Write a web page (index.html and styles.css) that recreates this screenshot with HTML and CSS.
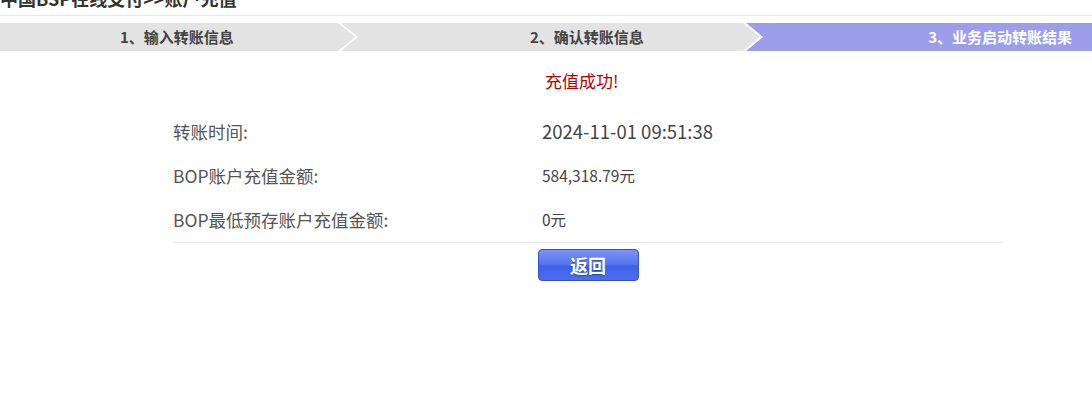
FILE: index.html
```html
<!DOCTYPE html>
<html lang="zh-CN">
<head>
    <meta charset="UTF-8">
    <meta name="viewport" content="width=device-width, initial-scale=1.0">
    <title>账户充值</title>
    <link rel="stylesheet" href="styles.css">
</head>
<body>
    <h2 class="page-title">中国BSP在线支付&gt;&gt;账户充值</h2>

    <div class="steps">
        <div class="step step-first"><span>1、输入转账信息</span></div>
        <div class="step step-middle"><span>2、确认转账信息</span></div>
        <div class="step step-last active"><span>3、业务启动转账结果</span></div>
    </div>

    <div class="result">
        <div class="result-msg">充值成功!</div>
        <div class="result-table">
            <div class="row">
                <div class="label">转账时间:</div>
                <div class="value value-time">2024-11-01 09:51:38</div>
            </div>
            <div class="row">
                <div class="label">BOP账户充值金额:</div>
                <div class="value">584,318.79元</div>
            </div>
            <div class="row">
                <div class="label">BOP最低预存账户充值金额:</div>
                <div class="value">0元</div>
            </div>
        </div>
        <div class="actions">
            <button class="btn-back" onclick="history.back()">返回</button>
        </div>
    </div>
</body>
</html>
```

FILE: styles.css
```css
body {
    margin: 0;
    font-family: "Noto Sans CJK SC", "Noto Sans", sans-serif;
    background-color: #fff;
    color: #444;
}
.page-title {
    margin: -12px 0 0;
    padding: 0 0 7px;
    font-size: 18px;
    line-height: 20px;
    font-weight: bold;
    color: #333;
    border-bottom: 1px solid #dfe8ed;
}
.steps {
    display: flex;
    height: 28px;
    margin-top: 7px;
}
.step {
    background-color: #e3e3e3;
    color: #444;
    font-size: 15px;
    font-weight: bold;
    line-height: 28px;
    white-space: nowrap;
}
.step-first {
    width: 355px;
    padding-left: 120px;
    box-sizing: border-box;
    clip-path: polygon(0 0, calc(100% - 17px) 0, 100% 50%, calc(100% - 17px) 100%, 0 100%);
}
.step-middle {
    width: 419px;
    margin-left: -14px;
    padding-left: 189px;
    box-sizing: border-box;
    clip-path: polygon(0 0, calc(100% - 17px) 0, 100% 50%, calc(100% - 17px) 100%, 0 100%, 17px 50%);
}
.step-last {
    flex: 1;
    margin-left: -14px;
    padding-right: 20px;
    text-align: right;
    clip-path: polygon(0 0, 100% 0, 100% 100%, 0 100%, 17px 50%);
}
.step.active {
    background-color: #9c9eeb;
    color: #fff;
}
.result {
    width: 830px;
    margin-left: 173px;
}
.result-msg {
    padding: 15px 0 13px 372px;
    line-height: 30px;
    font-size: 17px;
    color: #b30000;
}
.result-table {
    border-bottom: 1px solid #e3eaea;
    padding-bottom: 1px;
}
.row {
    display: flex;
    height: 44px;
    align-items: center;
}
.label {
    width: 369px;
    font-size: 17.5px;
    color: #555;
}
.value {
    font-size: 15.5px;
    color: #444;
}
.value-time {
    font-size: 18.5px;
}
.actions {
    text-align: center;
    padding-top: 6px;
}
.btn-back {
    width: 101px;
    height: 32px;
    border: 1px solid #3650c8;
    border-radius: 4px;
    background: linear-gradient(#7b95f5 0%, #5574ef 48%, #3f60ea 52%, #4d6df0 100%);
    color: #fff;
    font-family: "Noto Sans CJK SC", sans-serif;
    font-size: 18px;
    font-weight: bold;
    line-height: 28px;
    text-shadow: 0 1px 1px rgba(0, 0, 0, 0.3);
    cursor: pointer;
}
```
